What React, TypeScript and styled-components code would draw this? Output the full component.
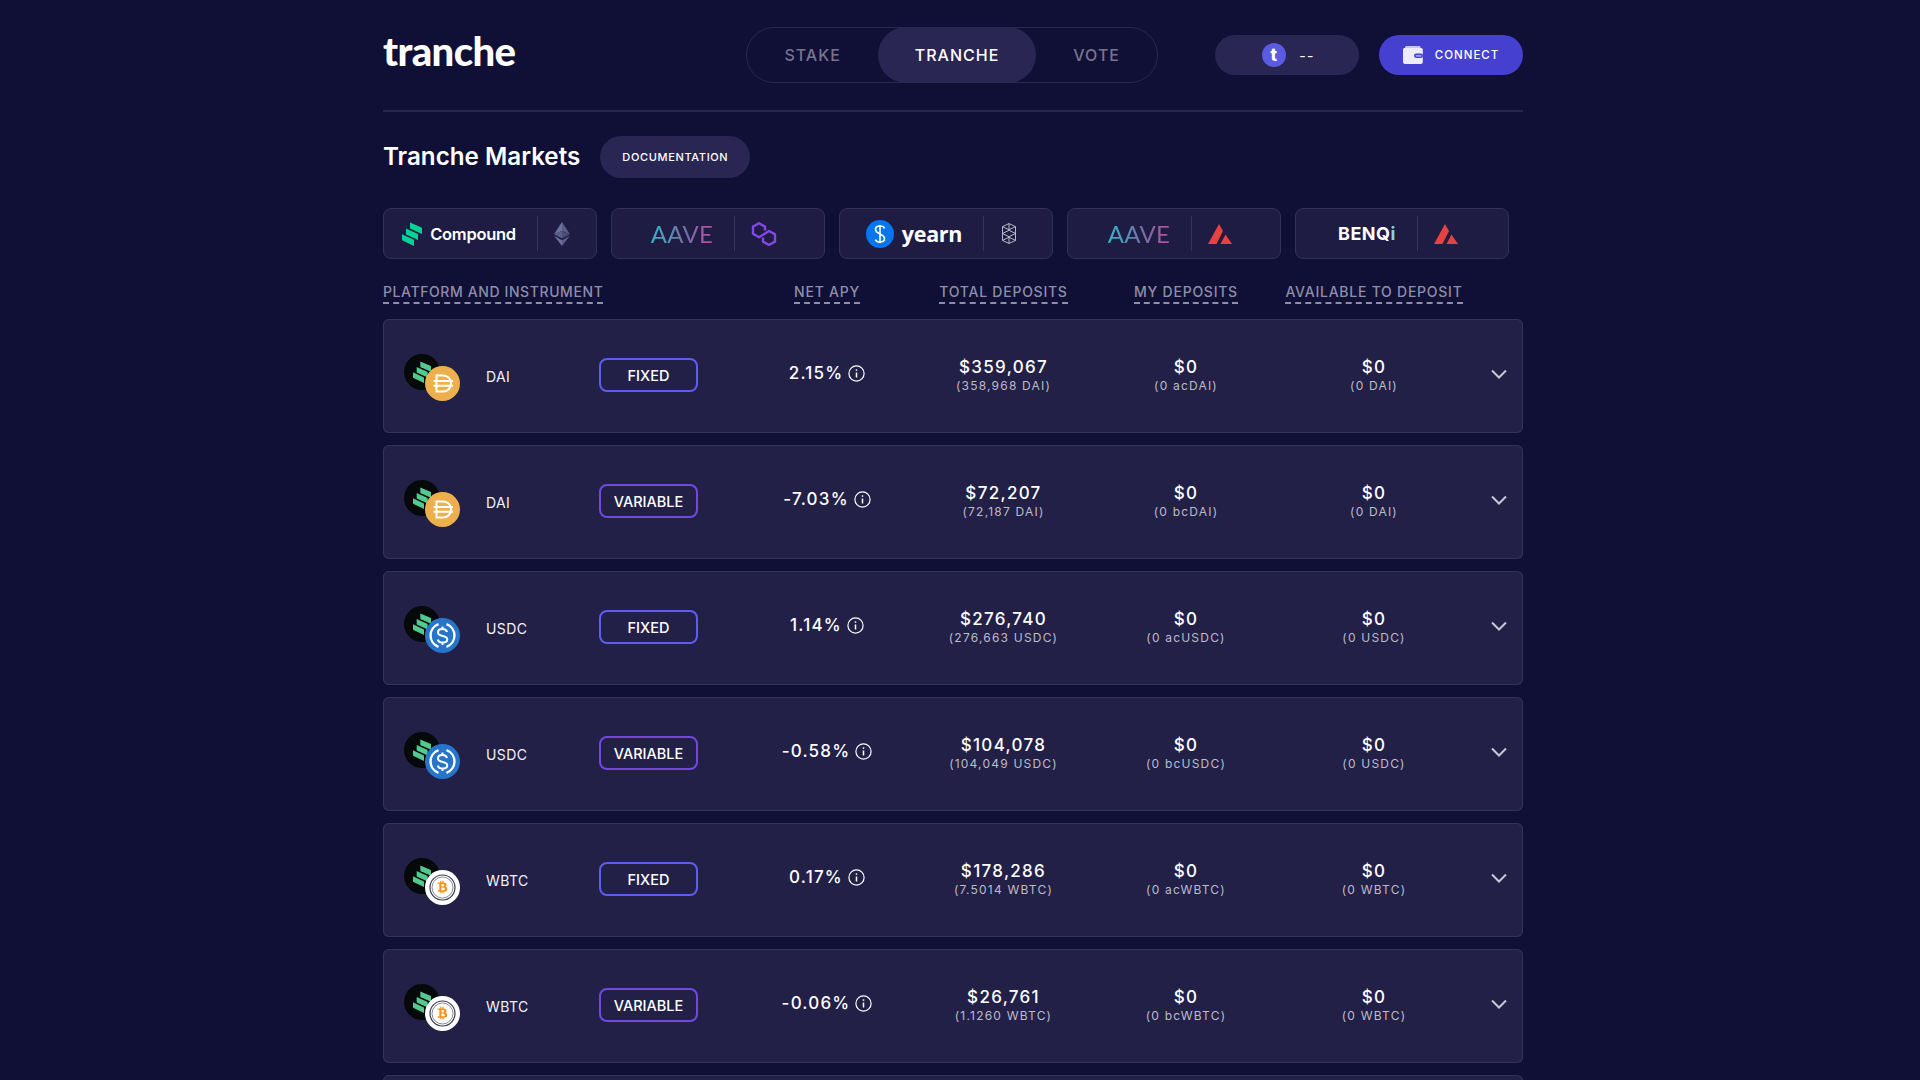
import styled, { createGlobalStyle } from "styled-components";
import { FaBtc } from "react-icons/fa";

const GlobalStyle = createGlobalStyle`
    html, body {
        margin: 0;
        height: 100%;
        overflow: hidden;
        background-color: #100f36;
        font-family: "Inter", "Liberation Sans", sans-serif;
    }
`

const columns = "357px 174px 179px 186px 190px 54px";

const Page = styled.div`
    height: 100vh;
    overflow: hidden;
    padding-right: 14px;
    box-sizing: border-box;
`

const Container = styled.main`
    width: 1140px;
    margin: 0 auto;
    padding-top: 27px;
`

const TopBar = styled.header`
    display: flex;
    align-items: center;
    padding-bottom: 27px;
    border-bottom: 2px solid #28264f;
`

const Logo = styled.div`
    font-family: "Lato", sans-serif;
    font-weight: 900;
    font-size: 40px;
    line-height: 40px;
    letter-spacing: -0.6px;
    color: #fff;
    margin-right: auto;
    margin-top: -8px;
`

const Nav = styled.nav`
    display: flex;
    height: 56px;
    box-sizing: border-box;
    border: 1px solid #2a2850;
    border-radius: 28px;
    margin-right: 57px;
`

const NavItem = styled.a<{ $active?: boolean }>`
    display: flex;
    align-items: center;
    padding: 0 37px;
    margin: -1px 0;
    border-radius: 28px;
    font-size: 16px;
    font-weight: 500;
    letter-spacing: 1px;
    color: ${(p) => (p.$active ? "#ffffff" : "#76758f")};
    background-color: ${(p) => (p.$active ? "#2a2653" : "transparent")};
`

const PillButton = styled.button<{ $primary?: boolean }>`
    display: flex;
    align-items: center;
    justify-content: center;
    width: 144px;
    height: 40px;
    border: 0;
    border-radius: 20px;
    font-family: inherit;
    color: #fff;
    background-color: ${(p) => (p.$primary ? "#4640d0" : "#2a2653")};
`

const Balance = styled(PillButton)`
    gap: 13px;
    margin-right: 20px;
    font-size: 14px;
    font-weight: 400;
    letter-spacing: 1.2px;
    padding: 0 0 0 3px;
`

const TokenDot = styled.span`
    display: flex;
    align-items: center;
    justify-content: center;
    width: 24px;
    height: 24px;
    border-radius: 50%;
    background-color: #5a5be0;
    font-size: 17px;
    font-weight: 800;
    color: #fff;
`

const Connect = styled(PillButton)`
    gap: 12px;
    font-size: 11.5px;
    font-weight: 500;
    letter-spacing: 1px;
`

const TitleRow = styled.div`
    display: flex;
    align-items: center;
    gap: 20px;
    margin-top: 24px;
`

const Title = styled.h1`
    margin: 0;
    font-size: 24.2px;
    font-weight: 600;
    line-height: 42px;
    color: #fff;
`

const DocButton = styled.button`
    height: 42px;
    padding: 0 22px;
    border: 0;
    border-radius: 21px;
    background-color: #2a2653;
    font-family: inherit;
    font-size: 11px;
    font-weight: 500;
    letter-spacing: 0.65px;
    color: #fff;
`

const Tabs = styled.div`
    display: flex;
    gap: 14px;
    margin-top: 30px;
`

const Tab = styled.div`
    display: flex;
    align-items: center;
    justify-content: center;
    gap: 16px;
    width: 214px;
    height: 51px;
    box-sizing: border-box;
    padding-right: 8px;
    border: 1px solid #33305c;
    border-radius: 8px;
    background-color: #1e1c42;
`

const TabBrand = styled.div`
    display: flex;
    align-items: center;
    gap: 8px;
    height: 35px;
    padding-right: 21px;
    border-right: 1px solid #36345c;
`

const CompoundName = styled.span`
    font-size: 16.5px;
    font-weight: 600;
    letter-spacing: -0.3px;
    color: #fff;
`

const AaveName = styled.span`
    font-family: "Lato", sans-serif;
    font-size: 24px;
    font-weight: 400;
    letter-spacing: 0.3px;
    background: linear-gradient(90deg, #33b6c6, #7b6aa8 60%, #b6509e);
    -webkit-background-clip: text;
    background-clip: text;
    color: transparent;
`

const YearnName = styled.span`
    font-family: "Open Sans", sans-serif;
    font-size: 21.5px;
    font-weight: 700;
    letter-spacing: -0.3px;
    line-height: 28px;
    color: #fff;
`

const BenqiName = styled.span`
    font-size: 18px;
    font-weight: 700;
    letter-spacing: 0.5px;
    color: #fff;

    i {
        font-style: normal;
        color: #7fd8e8;
    }
`

const ColumnHeads = styled.div`
    display: grid;
    grid-template-columns: ${columns};
    margin-top: 24px;
    margin-bottom: 15px;
`

const ColumnCell = styled.div<{ $left?: boolean }>`
    display: flex;
    justify-content: ${(p) => (p.$left ? "flex-start" : "center")};
    letter-spacing: ${(p) => (p.$left ? "0.6px" : "0.75px")};
`

const ColumnHead = styled.span`
    font-size: 14px;
    font-weight: 500;
    line-height: 18px;
    color: #8f8ea8;
    padding-bottom: 1px;
    border-bottom: 2px dashed #8f8ea8;
    white-space: nowrap;
`

const Rows = styled.div`
    display: flex;
    flex-direction: column;
    gap: 12px;
`

const Row = styled.div`
    display: grid;
    grid-template-columns: ${columns};
    align-items: center;
    height: 114px;
    box-sizing: border-box;
    border-radius: 6px;
    background-color: #222047;
    box-shadow: inset 0 0 0 1px #35325e;
    color: #fff;
`

const Platform = styled.div`
    display: flex;
    align-items: center;
    padding-left: 21px;
`

const Marks = styled.div`
    position: relative;
    width: 82px;
    height: 47px;
    flex: none;
    margin-top: 2px;
`

const CompoundBadge = styled.div`
    display: flex;
    align-items: center;
    justify-content: center;
    width: 36px;
    height: 36px;
    border-radius: 50%;
    background-color: #05090a;
`

// sits over the compound badge, bottom right
const TokenBadge = styled.div`
    position: absolute;
    left: 21px;
    top: 12px;
    width: 35px;
    height: 35px;
    display: flex;
`

const Symbol = styled.span`
    width: 113px;
    flex: none;
    font-size: 14px;
    letter-spacing: 0.4px;
    color: #f2f2f6;
`

const Tag = styled.span<{ $variable?: boolean }>`
    display: flex;
    align-items: center;
    justify-content: center;
    width: 99px;
    height: 34px;
    flex: none;
    box-sizing: border-box;
    margin-top: -2px;
    border: 2px solid ${(p) => (p.$variable ? "#7248e0" : "#5f5cf0")};
    border-radius: 8px;
    font-size: 14.5px;
    font-weight: 500;
    color: #fff;
`

const Apy = styled.div`
    display: flex;
    align-items: center;
    justify-content: center;
    gap: 5px;
    margin-top: -6px;
    font-size: 17px;
    font-weight: 500;
    letter-spacing: 1.2px;
`

const Amount = styled.div`
    display: flex;
    flex-direction: column;
    align-items: center;
    margin-top: -4px;
`

const AmountValue = styled.span`
    font-size: 17px;
    font-weight: 500;
    line-height: 22px;
    letter-spacing: 1.3px;
    color: #fff;
`

const AmountSub = styled.span`
    font-size: 12px;
    line-height: 15px;
    letter-spacing: 1.2px;
    color: #bdbccb;
`

const Chevron = styled.div`
    display: flex;
    justify-content: center;
    padding-left: 5px;
    margin-top: -4px;
`

function CompoundMark({ size, color }: { size: number; color: string }) {
    return (
        <svg width={size * 20 / 24} height={size} viewBox="0 0 20 24" fill={color}>
            <path d="M8 0.5 19 5.2c.6.3 1 .8 1 1.4V12L8.6 6.8C8.2 6.6 8 6.3 8 5.9Z" />
            <path d="M4 6.5 15.5 11.8c.3.1.5.4.5.8V18L4.6 12.8c-.4-.2-.6-.5-.6-.9Z" />
            <path d="M0 12.2 11.5 17.6c.3.1.5.4.5.8V24L.6 18.6c-.4-.2-.6-.5-.6-.9Z" />
        </svg>
    )
}

function EthIcon() {
    return (
        <svg width="16" height="24" viewBox="0 0 16 24">
            <path d="M8 0 0 12.2 8 9Z" fill="#6f6f9c" />
            <path d="M8 0 16 12.2 8 9Z" fill="#5c5c88" />
            <path d="M8 9 0 12.2 8 16.5Z" fill="#5c5c88" />
            <path d="M8 9 16 12.2 8 16.5Z" fill="#4c4c78" />
            <path d="M0 13.8 8 24V18.3Z" fill="#6f6f9c" />
            <path d="M16 13.8 8 24V18.3Z" fill="#5c5c88" />
        </svg>
    )
}

function PolygonIcon() {
    return (
        <svg width="26" height="24" viewBox="0 0 26 24" fill="none" stroke="#8247e5" strokeWidth="2.4" strokeLinejoin="round">
            <path d="M14 8.5V4.6L8 1.2 2 4.6v7.2L8 15.2 18 9 24 12.4v7.2L18 23l-6-3.4v-4" />
        </svg>
    )
}

function FantomIcon() {
    return (
        <svg width="18" height="21" viewBox="0 0 18 21" fill="none" stroke="#c9c9d6" strokeWidth="0.9">
            <path d="M9 .6 15.5 3.6V17.4L9 20.4 2.5 17.4V3.6Z" />
            <path d="M2.5 3.6 9 6.8 15.5 3.6M2.5 10.5 9 13.7 15.5 10.5 9 7.3ZM2.5 17.4 9 14.2 15.5 17.4M9 .6V6.8M9 14.2V20.4" />
        </svg>
    )
}

function AvaxIcon() {
    return (
        <svg width="24" height="20" viewBox="0 0 24 20" fill="#e84142">
            <path d="M11 0 15 7 8.500 20H0Z" />
            <path d="M17.500 10.500 24 20H12.500Z" />
        </svg>
    )
}

function YearnIcon() {
    return (
        <svg width="28" height="28" viewBox="0 0 28 28" fill="none">
            <circle cx="14" cy="14" r="14" fill="#0675f0" />
            <path d="M18.500 8.500C18 6.500 16 6 14 6s-4.500 1-4.500 3.500 2.500 3.500 4.500 4.500 4.500 2 4.500 4.500S16 22 14 22s-4-.5-4.500-2.500" stroke="#fff" strokeWidth="1.600" />
            <path d="M14 5V23" stroke="#fff" strokeWidth="1.600" />
        </svg>
    )
}

function WalletIcon() {
    return (
        <svg width="20" height="18" viewBox="0 0 20 18">
            <path d="M2 1.500C2 .7 2.700 0 3.500 0H17l1 2.800H2Z" fill="#c9c6f5" />
            <path d="M0 3.500C0 2.700.7 2 1.500 2H18c1 0 1.800.8 1.800 1.800V16c0 1.100-.9 2-2 2H2c-1.100 0-2-.9-2-2Z" fill="#ecebff" />
            <rect x="11" y="7.500" width="9" height="4.600" rx="2.300" fill="#4640d0" />
            <rect x="12.600" y="8.900" width="6" height="1.800" rx="0.900" fill="#a5a2ee" />
        </svg>
    )
}

function DaiIcon() {
    return (
        <svg width="35" height="35" viewBox="0 0 35 35" fill="none" stroke="#fff" strokeWidth="2">
            <circle cx="17.500" cy="17.500" r="17.500" fill="#edb04c" stroke="none" />
            <path d="M11.500 9.500H18c4.800 0 8 3.400 8 8s-3.200 8-8 8h-6.500Z" />
            <path d="M8.500 15H28M8.500 19.800H28" />
        </svg>
    )
}

function UsdcIcon() {
    return (
        <svg width="35" height="35" viewBox="0 0 35 35" fill="none" stroke="#fff" strokeWidth="2.400">
            <circle cx="17.500" cy="17.500" r="17.500" fill="#2775ca" stroke="none" />
            <path d="M13.500 6.200A12 12 0 0 0 13.500 28.800M21.500 6.200A12 12 0 0 1 21.500 28.800" />
            <path d="M22 14c-.5-2-2.400-3-4.600-3-2.500 0-4.400 1.300-4.400 3.400 0 4.800 9.300 2.400 9.300 6.800 0 2.100-2 3.300-4.700 3.300-2.400 0-4.300-1.100-4.800-3.100" strokeWidth="2" />
            <path d="M17.500 8.500V11M17.500 24.500V27" strokeWidth="2" />
        </svg>
    )
}

function BtcIcon() {
    return (
        <svg width="35" height="35" viewBox="0 0 35 35" fill="none">
            <circle cx="17.500" cy="17.500" r="17.500" fill="#fff" />
            <circle cx="17.500" cy="17.500" r="12.500" stroke="#3a3a52" strokeWidth="1.200" />
            <circle cx="17.500" cy="17.500" r="10.500" stroke="#6a6a80" strokeWidth="0.800" />
            <FaBtc x="11" y="10.500" size={13} color="#f7931a" />
        </svg>
    )
}

const tokenIcons = { DAI: <DaiIcon />, USDC: <UsdcIcon />, WBTC: <BtcIcon /> };

type Market = {
    symbol: "DAI" | "USDC" | "WBTC";
    variable?: boolean;
    apy: string;
    total: string;
    totalSub: string;
    mine: string;
};

const markets: Market[] = [
    { symbol: "DAI", apy: "2.15%", total: "$359,067", totalSub: "(358,968 DAI)", mine: "acDAI" },
    { symbol: "DAI", variable: true, apy: "-7.03%", total: "$72,207", totalSub: "(72,187 DAI)", mine: "bcDAI" },
    { symbol: "USDC", apy: "1.14%", total: "$276,740", totalSub: "(276,663 USDC)", mine: "acUSDC" },
    { symbol: "USDC", variable: true, apy: "-0.58%", total: "$104,078", totalSub: "(104,049 USDC)", mine: "bcUSDC" },
    { symbol: "WBTC", apy: "0.17%", total: "$178,286", totalSub: "(7.5014 WBTC)", mine: "acWBTC" },
    { symbol: "WBTC", variable: true, apy: "-0.06%", total: "$26,761", totalSub: "(1.1260 WBTC)", mine: "bcWBTC" },
];

function MarketRow({ market }: { market: Market }) {
    return (
        <Row>
            <Platform>
                <Marks>
                    <CompoundBadge>
                        <CompoundMark size={22} color="#52c98f" />
                    </CompoundBadge>
                    <TokenBadge>{tokenIcons[market.symbol]}</TokenBadge>
                </Marks>
                <Symbol>{market.symbol}</Symbol>
                <Tag $variable={market.variable}>{market.variable ? "VARIABLE" : "FIXED"}</Tag>
            </Platform>
            <Apy>
                {market.apy}
                <svg width="17" height="17" viewBox="0 0 17 17" fill="none" stroke="#fff" strokeWidth="1.2">
                    <circle cx="8.500" cy="8.500" r="7.600" />
                    <path d="M8.500 7.500V12.500" strokeWidth="1.500" />
                    <path d="M8.500 4.300V5.800" strokeWidth="1.500" />
                </svg>
            </Apy>
            <Amount>
                <AmountValue>{market.total}</AmountValue>
                <AmountSub>{market.totalSub}</AmountSub>
            </Amount>
            <Amount>
                <AmountValue>$0</AmountValue>
                <AmountSub>(0 {market.mine})</AmountSub>
            </Amount>
            <Amount>
                <AmountValue>$0</AmountValue>
                <AmountSub>(0 {market.symbol})</AmountSub>
            </Amount>
            <Chevron>
                <svg width="16" height="10" viewBox="0 0 16 10" fill="none" stroke="#c9c8d4" strokeWidth="2">
                    <path d="M1 1.500 8 8.500 15 1.500" />
                </svg>
            </Chevron>
        </Row>
    )
}

export default function App() {
    return (
        <Page>
            <GlobalStyle />
            <Container>
                <TopBar>
                    <Logo>tranche</Logo>
                    <Nav>
                        <NavItem>STAKE</NavItem>
                        <NavItem $active>TRANCHE</NavItem>
                        <NavItem>VOTE</NavItem>
                    </Nav>
                    <Balance>
                        <TokenDot>t</TokenDot>
                        --
                    </Balance>
                    <Connect $primary>
                        <WalletIcon />
                        CONNECT
                    </Connect>
                </TopBar>

                <TitleRow>
                    <Title>Tranche Markets</Title>
                    <DocButton>DOCUMENTATION</DocButton>
                </TitleRow>

                <Tabs>
                    <Tab>
                        <TabBrand>
                            <CompoundMark size={24} color="#00d395" />
                            <CompoundName>Compound</CompoundName>
                        </TabBrand>
                        <EthIcon />
                    </Tab>
                    <Tab>
                        <TabBrand>
                            <AaveName>AAVE</AaveName>
                        </TabBrand>
                        <PolygonIcon />
                    </Tab>
                    <Tab>
                        <TabBrand>
                            <YearnIcon />
                            <YearnName>yearn</YearnName>
                        </TabBrand>
                        <FantomIcon />
                    </Tab>
                    <Tab>
                        <TabBrand>
                            <AaveName>AAVE</AaveName>
                        </TabBrand>
                        <AvaxIcon />
                    </Tab>
                    <Tab>
                        <TabBrand>
                            <BenqiName>BENQ<i>i</i></BenqiName>
                        </TabBrand>
                        <AvaxIcon />
                    </Tab>
                </Tabs>

                <ColumnHeads>
                    <ColumnCell $left><ColumnHead>PLATFORM AND INSTRUMENT</ColumnHead></ColumnCell>
                    <ColumnCell><ColumnHead>NET APY</ColumnHead></ColumnCell>
                    <ColumnCell><ColumnHead>TOTAL DEPOSITS</ColumnHead></ColumnCell>
                    <ColumnCell><ColumnHead>MY DEPOSITS</ColumnHead></ColumnCell>
                    <ColumnCell><ColumnHead>AVAILABLE TO DEPOSIT</ColumnHead></ColumnCell>
                </ColumnHeads>

                <Rows>
                    {markets.map((market) => (
                        <MarketRow key={market.mine} market={market} />
                    ))}
                    <Row />
                </Rows>
            </Container>
        </Page>
    )
}
